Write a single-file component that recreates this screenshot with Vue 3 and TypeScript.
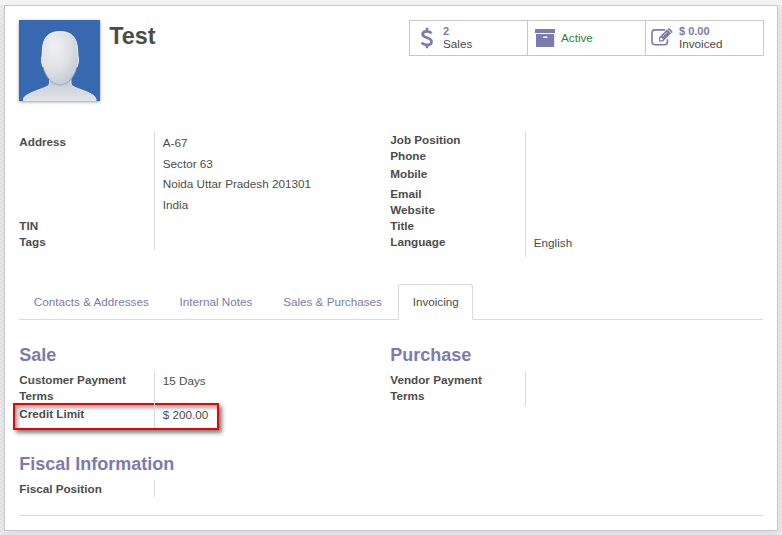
<script setup lang="ts">
interface Row { label: string; values?: string[]; kind?: string }

const left: Row[] = [
  { label: 'Address', values: ['A-67', 'Sector 63', 'Noida Uttar Pradesh 201301', 'India'], kind: 'address' },
  { label: 'TIN' },
  { label: 'Tags' },
]
const right: Row[] = [
  { label: 'Job Position' },
  { label: 'Phone' },
  { label: 'Mobile', kind: 'mobile' },
  { label: 'Email' },
  { label: 'Website' },
  { label: 'Title' },
  { label: 'Language', values: ['English'], kind: 'language' },
]
const tabs: string[] = ['Contacts & Addresses', 'Internal Notes', 'Sales & Purchases', 'Invoicing']
const active = 'Invoicing'
</script>

<template>
  <div class="page">
    <main class="sheet">
      <header class="header">
        <svg class="avatar" viewBox="0 0 81 81">
          <defs>
            <radialGradient id="face" cx="0.35" cy="0.3" r="0.8">
              <stop offset="0" stop-color="#f0f1f3" />
              <stop offset="0.55" stop-color="#dce0e4" />
              <stop offset="1" stop-color="#bdc4ce" />
            </radialGradient>
            <linearGradient id="bust" x1="0" y1="0" x2="0" y2="1">
              <stop offset="0" stop-color="#b5bdc9" />
              <stop offset="0.45" stop-color="#d3d8de" />
              <stop offset="1" stop-color="#dfe2e6" />
            </linearGradient>
          </defs>
          <rect width="81" height="81" fill="#3768b0" />
          <path d="M30.500 58V63C30 67 25 67.500 19 70C11 73 4.500 76 4.500 79V81H77V79C76 75 70 72.500 63 70C57 67.500 52.500 67 52 63V58Z" fill="url(#bust)" stroke="#eef0f3" stroke-width="0.8" />
          <path d="M41 11.500C52 11.500 57.500 17 58.500 28L59 36C60.300 40 59.300 44 58 47C55 58 48 65 41 65C34 65 27 58 24 47C22.700 44 22 40 23 36L23.500 28C24.500 17 30 11.500 41 11.500Z" fill="url(#face)" />
          <path d="M24 47C27 58 34 65 41 65C48 65 55 58 58 47" fill="none" stroke="#8f9bad" stroke-width="0.7" />
          <path d="M24 47C22.700 44 22 40 23 36L23.500 28C24.500 17 30 11.500 41 11.500C52 11.500 57.500 17 58.500 28L59 36C60.300 40 59.300 44 58 47" fill="none" stroke="#fff" stroke-width="0.8" />
        </svg>
        <h1 class="name">Test</h1>
        <div class="stats">
          <div class="stat">
            <svg class="icon dollar" viewBox="0 0 14 22">
              <path d="M11.500 6.200C10.200 5 8.500 4.400 6.800 4.400C4.300 4.400 2.600 5.500 2.600 7.300C2.600 9.200 4.200 9.800 6.900 10.700C9.900 11.600 11.500 12.600 11.500 14.700C11.500 16.800 9.800 17.900 7 17.900C4.800 17.900 3 17.100 1.500 15.800M7 .7V4.500M7 17.800V21.300" fill="none" stroke="#7c7bad" stroke-width="2.700" />
            </svg>
            <div class="stat-text"><b>2</b><span>Sales</span></div>
          </div>
          <div class="stat">
            <svg class="icon archive" viewBox="0 0 20 18">
              <path d="M.5 0H19.500Q20 0 20 .5V4H0V.5Q0 0 .5 0ZM1 5H19.200V17.300Q19.200 18 18.500 18H1.700Q1 18 1 17.300ZM8.200 7.600V8.900H12.300V7.600Z" fill="#7c7bad" fill-rule="evenodd" />
            </svg>
            <div class="stat-text active"><span>Active</span></div>
          </div>
          <div class="stat">
            <svg class="icon edit" viewBox="0 0 22 18">
              <path d="M14 1.900H4Q1 1.900 1 4.900V13.700Q1 16.700 4 16.700H13.500Q16.500 16.700 16.500 13.700V11.200" fill="none" stroke="#7c7bad" stroke-width="1.600" />
              <path d="M8 9.500L16.200 1.300L20.100 5.200L11.900 13.400H8ZM9.200 10.300V12.200H11L12 11.200L10.200 9.400Z" fill="#7c7bad" fill-rule="evenodd" />
              <path d="M11.400 8.700L16 4.100" fill="none" stroke="#fff" stroke-width="0.6" />
              <path d="M17 .6Q17.900 -.2 18.800 .6L21.100 2.900Q21.900 3.800 21.100 4.700L20.700 5.100L16.600 1Z" fill="#7c7bad" />
            </svg>
            <div class="stat-text"><b>$ 0.00</b><span>Invoiced</span></div>
          </div>
        </div>
      </header>

      <section class="columns details">
        <dl v-for="(rows, i) in [left, right]" :key="i" class="fields">
          <div v-for="row in rows" :key="row.label" class="row" :class="row.kind">
            <dt>{{ row.label }}</dt>
            <dd><div v-for="v in row.values" :key="v">{{ v }}</div></dd>
          </div>
        </dl>
      </section>

      <nav class="tabs">
        <a v-for="t in tabs" :key="t" class="tab" :class="{ current: t === active }">{{ t }}</a>
      </nav>

      <section class="columns terms">
        <div class="group">
          <h2>Sale</h2>
          <dl class="fields">
            <div class="row payment"><dt>Customer Payment Terms</dt><dd>15 Days</dd></div>
            <div class="row credit"><dt>Credit Limit</dt><dd>$ 200.00</dd></div>
          </dl>
        </div>
        <div class="group">
          <h2>Purchase</h2>
          <dl class="fields">
            <div class="row payment"><dt>Vendor Payment Terms</dt><dd></dd></div>
          </dl>
        </div>
      </section>

      <section class="group fiscal">
        <h2>Fiscal Information</h2>
        <dl class="fields">
          <div class="row"><dt>Fiscal Position</dt><dd></dd></div>
        </dl>
      </section>
    </main>
  </div>
</template>

<style>
body { margin: 0; }
</style>

<style scoped>
* { box-sizing: border-box; }
.page {
  width: 782px;
  height: 535px;
  padding: 5px 4px 4px;
  overflow: hidden;
  background: linear-gradient(#f4f4f4 0 5px, transparent 5px), repeating-conic-gradient(#e6e6e6 0 25%, #f0f0f0 0 50%) 0 0 / 4px 4px;
  font: 11.7px/16px "Liberation Sans", Arial, sans-serif;
  color: #4c4c4c;
}
.sheet {
  height: 526px;
  padding: 14px;
  background: #fff;
  border: 1px solid #c8c8d3;
  box-shadow: 0 4px 12px rgba(0, 0, 0, 0.08);
}
.header { display: flex; height: 112px; align-items: flex-start; }
.avatar { width: 81px; height: 81px; box-shadow: 0 1px 3px rgba(0, 0, 0, 0.4); }
.name { margin: 2px 0 0 9.2px; font-size: 23.4px; line-height: 28px; }
.stats { display: flex; width: 355px; height: 36px; margin-left: auto; margin-right: -1px; border: 1px solid #c8c8c8; }
.stat { display: flex; flex: none; width: 118px; align-items: center; border-right: 1px solid #c8c8c8; }
.stat:last-child { width: 117px; border-right: 0; }
.icon { flex: none; fill: none; }
.dollar { width: 14px; height: 22px; margin: 0 9px 0 10px; }
.archive { width: 20px; height: 18px; margin: 0 6px 0 7px; }
.edit { width: 22px; height: 18px; margin: -3px 6px 0 5px; }
.stat-text { display: flex; flex-direction: column; padding-bottom: 1px; line-height: 13px; }
.stat-text b { height: 12px; font-size: 11px; color: #7c7bad; }
.stat-text.active { padding-bottom: 2px; color: #2b8040; }
.columns { display: grid; grid-template-columns: 371px 1fr; align-items: start; }
.details { height: 152px; }
.fields { margin: 0; }
.row { display: grid; grid-template-columns: 135px 1fr; min-height: 16px; }
dt { padding: 0 10px 0 0.3px; font-weight: bold; }
dd { margin: 0; padding-left: 7.8px; border-left: 1px solid #d9d9d9; }
.address { height: 86px; }
.address dt { padding-top: 2px; }
.address dd { padding-top: 1px; line-height: 20.6px; }
.mobile { height: 22px; }
.mobile dt { padding-top: 2px; }
.language { height: 23px; }
.language dd { padding-top: 1px; }
.tabs { display: flex; height: 36px; border-bottom: 1px solid #d9d9d9; }
.tab { height: 36px; margin-right: 1.6px; padding: 9px 13.4px 0 13.8px; border: 1px solid transparent; border-radius: 3px 3px 0 0; color: #7c7bad; }
.tab.current { border-color: #d9d9d9; border-bottom-color: #fff; background: #fff; color: #4c4c4c; }
.terms { height: 134px; padding-top: 25px; }
h2 { margin: 0; padding-left: 0.2px; font-size: 18px; line-height: 20px; color: #7c7bad; }
.group .fields { padding-top: 7px; }
.payment { height: 34px; }
.payment dd { padding-top: 1px; }
.credit {
  width: 206px;
  height: 27px;
  margin: -3px 0 0 -6px;
  padding: 0 0 0 4px;
  border: 2px solid #f00000;
  box-shadow: 3px 3px 4px rgba(0, 0, 0, 0.5), inset 3px 3px 4px rgba(0, 0, 0, 0.35);
}
.credit dt { padding-top: 1px; }
.credit dd { padding-top: 2px; }
.fiscal { height: 62px; border-bottom: 1px solid #d9d9d9; }
</style>
